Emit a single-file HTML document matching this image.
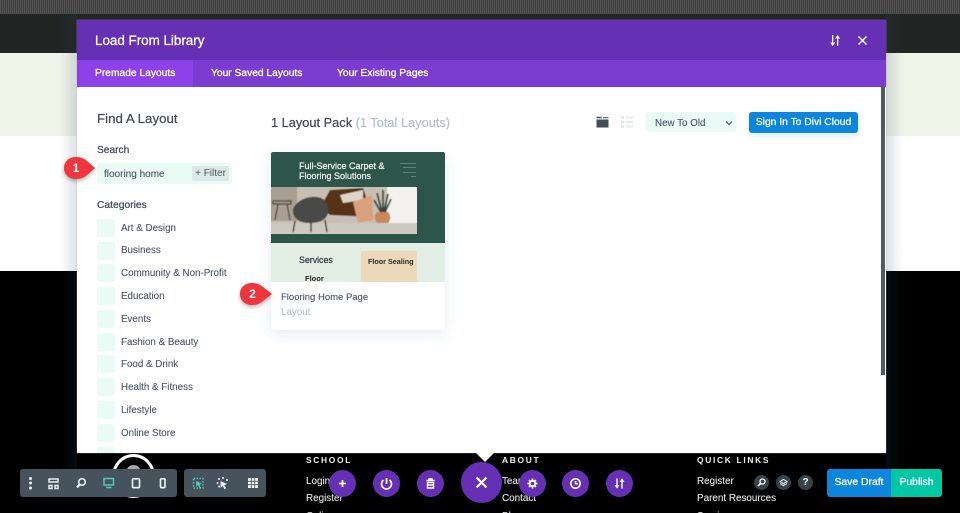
<!DOCTYPE html>
<html><head><meta charset="utf-8"><style>
*{box-sizing:border-box;margin:0;padding:0}
html,body{width:960px;height:513px;overflow:hidden;background:#000}
body{position:relative;font-family:"Liberation Sans",sans-serif;color:#4c5866}
.a{position:absolute;white-space:nowrap}
.cb{position:absolute;left:97px;width:18px;height:18px;background:#eafaf5;border-radius:3px}
.cl{position:absolute;left:121px;font-size:9.8px;color:#4c5866;line-height:12px;white-space:nowrap;-webkit-text-stroke:.12px #4c5866}
.rb{position:absolute;border-radius:50%;background:#6630b4;width:27px;height:27px;top:470px}
.rb svg,.dk svg,.tb svg{position:absolute}
.f{position:absolute;color:#e6e6e6;font-size:9.9px;white-space:nowrap;line-height:12px;-webkit-text-stroke:.1px #e6e6e6}
.h{position:absolute;color:#eee;font-size:8.4px;font-weight:bold;letter-spacing:1.7px;white-space:nowrap;line-height:10px}
.dk{position:absolute;top:475px;width:15px;height:15px;border-radius:50%;background:#37424a}
.w{color:#fff;-webkit-text-stroke:.3px #fff}
.t{position:absolute;white-space:nowrap;top:67px;font-size:10.25px;line-height:13px}
.d{color:#3e4a54;-webkit-text-stroke:.22px #3e4a54}
</style></head><body>
<div class="a" style="left:0;top:0;width:960px;height:14px;background:repeating-linear-gradient(90deg,#555 0,#555 1px,#3c3c3c 1px,#3c3c3c 2px)"></div>
<div class="a" style="left:0;top:14px;width:960px;height:39px;background:#222524"></div>
<div class="a" style="left:0;top:53px;width:960px;height:83px;background:#f0f3e8"></div>
<div class="a" style="left:0;top:136px;width:960px;height:135px;background:#fff"></div>
<div class="a" style="left:0;top:271px;width:960px;height:242px;background:#000"></div>
<div class="a" style="left:60px;top:14px;width:17px;height:460px;background:linear-gradient(90deg,rgba(40,70,90,0),rgba(40,70,90,.16))"></div>
<div class="a" style="left:886px;top:14px;width:17px;height:460px;background:linear-gradient(270deg,rgba(40,70,90,0),rgba(40,70,90,.16))"></div>

<!-- footer -->
<div class="h" style="left:306px;top:455px">SCHOOL</div>
<div class="f" style="left:306px;top:476px">Login</div>
<div class="f" style="left:306px;top:493px">Register</div>
<div class="f" style="left:306px;top:511px">Online</div>
<div class="h" style="left:502px;top:455px">ABOUT</div>
<div class="f" style="left:502px;top:476px">Team</div>
<div class="f" style="left:502px;top:493px">Contact</div>
<div class="f" style="left:502px;top:511px">Blog</div>
<div class="h" style="left:697px;top:455px">QUICK LINKS</div>
<div class="f" style="left:697px;top:476px">Register</div>
<div class="f" style="left:697px;top:493px">Parent Resources</div>
<div class="f" style="left:697px;top:511px">Services</div>
<div class="a" style="left:112px;top:454px;width:43px;height:44px;border:3px solid #fff;border-radius:50%"></div>
<div class="a" style="left:127px;top:465px;width:13px;height:10px;background:#aaa;border-radius:50%"></div>

<!-- modal -->
<div class="a" style="left:77px;top:20px;width:809px;height:433px;background:#fff;box-shadow:0 0 1px #aaa"></div>
<div class="a" style="left:77px;top:20px;width:809px;height:40px;background:#6630b4"></div>
<div class="a" style="left:77px;top:60px;width:809px;height:27px;background:#7b3dcf"></div>
<div class="a" style="left:77px;top:60px;width:116px;height:27px;background:#8c42e8"></div>
<div class="a w" style="left:95px;top:33px;font-size:13.4px;line-height:16px">Load From Library</div>
<div class="t w" style="left:95px">Premade Layouts</div>
<div class="t w" style="left:211px">Your Saved Layouts</div>
<div class="t w" style="left:337px">Your Existing Pages</div>
<svg class="a" style="left:829px;top:34px" width="12" height="13" viewBox="0 0 12 13" fill="#fff" stroke="none"><path d="M3 1h1.300v7.500h1.900L3.650 12 1.100 8.500H3zM8 12h1.300V4.500h1.900L8.650 1 6.100 4.500H8z"/></svg>
<svg class="a" style="left:857px;top:35px" width="11" height="11" viewBox="0 0 11 11" fill="none" stroke="#fff" stroke-width="1.500"><path d="M1.500 1.500l8 8M9.500 1.500l-8 8"/></svg>
<div class="a" style="left:881px;top:87px;width:4px;height:288px;background:#4f5b66"></div>

<div class="a d" style="left:97px;top:111px;font-size:13.3px;line-height:16px">Find A Layout</div>
<div class="a d" style="left:97px;top:144px;font-size:10.2px;line-height:13px">Search</div>
<div class="a" style="left:97px;top:163px;width:135px;height:21px;background:#eafaf5;border-radius:3px"></div>
<div class="a" style="left:104px;top:168px;font-size:10px;color:#4c5866;line-height:13px;-webkit-text-stroke:.12px #4c5866">flooring home</div>
<div class="a" style="left:192px;top:166px;width:37px;height:15px;background:#dde9e6;border-radius:2px;font-size:10px;line-height:15px;text-align:center;color:#4c5866">+ Filter</div>
<div class="a d" style="left:97px;top:199px;font-size:10.3px;line-height:14px">Categories</div>
<div class="cb" style="top:219px"></div><div class="cl" style="top:223px">Art &amp; Design</div>
<div class="cb" style="top:242px"></div><div class="cl" style="top:245px">Business</div>
<div class="cb" style="top:264px"></div><div class="cl" style="top:268px">Community &amp; Non-Profit</div>
<div class="cb" style="top:287px"></div><div class="cl" style="top:291px">Education</div>
<div class="cb" style="top:310px"></div><div class="cl" style="top:314px">Events</div>
<div class="cb" style="top:333px"></div><div class="cl" style="top:337px">Fashion &amp; Beauty</div>
<div class="cb" style="top:355px"></div><div class="cl" style="top:359px">Food &amp; Drink</div>
<div class="cb" style="top:378px"></div><div class="cl" style="top:382px">Health &amp; Fitness</div>
<div class="cb" style="top:401px"></div><div class="cl" style="top:405px">Lifestyle</div>
<div class="cb" style="top:424px"></div><div class="cl" style="top:428px">Online Store</div>
<div class="a" style="left:97px;top:447px;width:18px;height:6px;background:#eafaf5;border-radius:3px 3px 0 0"></div>

<div class="a d" style="left:271px;top:115px;font-size:12.8px;line-height:16px">1 Layout Pack <span style="color:#b4c4c6;-webkit-text-stroke:.22px #b4c4c6">(1 Total Layouts)</span></div>

<svg class="a" style="left:596px;top:115px" width="13" height="13" viewBox="0 0 13 13" fill="#414e58"><path d="M.5 4.500h12v8H.5zM.5 3.300V1.800h4.500l1 1.500zM6.800 2.300h5.700v1H6.800z"/></svg>
<svg class="a" style="left:621px;top:116px" width="12" height="12" viewBox="0 0 12 12" fill="#dfecea"><path d="M0 0h3v3H0zM4.500 .5H12v2H4.500zM0 4.500h3v3H0zM4.500 5H12v2H4.500zM0 9h3v3H0zM4.500 9.500H12v2H4.500z"/></svg>
<div class="a" style="left:646px;top:112px;width:90px;height:20px;background:#eafaf5;border-radius:3px"></div>
<div class="a" style="left:655px;top:117px;font-size:9.8px;color:#4c5866;line-height:13px;-webkit-text-stroke:.12px #4c5866">New To Old</div>
<svg class="a" style="left:725px;top:120px" width="8" height="6" viewBox="0 0 8 6" fill="none" stroke="#4c5866" stroke-width="1.200"><path d="M1 1.500l3 3 3-3"/></svg>
<div class="a" style="left:749px;top:112px;width:109px;height:21px;background:#0b86dc;border-radius:3px;box-shadow:0 3px 8px rgba(11,134,220,.15)"></div>
<div class="a w" style="left:749px;top:113px;width:109px;font-size:10.3px;line-height:20px;text-align:center">Sign In To Divi Cloud</div>

<!-- card -->
<div class="a" style="left:271px;top:152px;width:174px;height:178px;background:#fff;border-radius:2px;box-shadow:0 4px 14px rgba(60,110,150,.14);overflow:hidden">
 <div class="a" style="left:0;top:0;width:174px;height:91px;background:#2d5549"></div>
 <div class="a" style="left:28px;top:9px;color:#f3f3ee;font-size:9px;line-height:10px;-webkit-text-stroke:.25px #f3f3ee">Full-Service Carpet &amp;<br>Flooring Solutions</div>
 <div class="a" style="left:129px;top:11px;width:16px;height:1px;background:#5f8276"></div>
 <div class="a" style="left:132px;top:15px;width:13px;height:1px;background:#5f8276"></div>
 <div class="a" style="left:132px;top:20px;width:13px;height:1px;background:#5f8276"></div>
 <div class="a" style="left:140px;top:24px;width:5px;height:1px;background:#5f8276"></div>
 <svg class="a" style="left:0;top:35px" width="146" height="47" viewBox="0 0 146 47">
  <defs><filter id="b" x="-5%" y="-5%" width="110%" height="110%"><feGaussianBlur stdDeviation=".5"/></filter><clipPath id="c"><rect width="146" height="47"/></clipPath></defs>
  <g clip-path="url(#c)"><g filter="url(#b)">
  <rect x="-3" y="-3" width="152" height="53" fill="#c7bfb2"/>
  <rect x="116" y="-3" width="33" height="39" fill="#f4f2ee"/>
  <rect x="-3" y="-3" width="29" height="37" fill="#a89f92"/>
  <path d="M-3 36H149V50H-3z" fill="#cdc9c0"/>
  <path d="M49 21 59 3 92 1 102 30 59 28z" fill="#573312"/>
  <path d="M69 8 92 3 92 13 72 16z" fill="#ddd5c8"/>
  <path d="M82 15 101 8 102 33 87 36z" fill="#d8a07c"/>
  <path d="M22 22C26 13 36 9 46 10 54 11 57 16 57 24 57 32 50 36 38 36 28 36 21 31 22 22z" fill="#4a4a47"/>
  <path d="M24 34l-2 11M54 33l2 12M40 35v10" stroke="#2b241d" stroke-width="1.400"/>
  <path d="M106 25c-3 3-3 8 0 11h11c3-3 3-8 0-11z" fill="#c9875a"/>
  <path d="M111 25 106 6M112 25V3M113 25l4-18M110 25l-7-12M114 25l6-13" stroke="#36453a" stroke-width="1.800"/>
  <path d="M2 14h18v3H2zM7 17l-3 16M16 17l3 16" stroke="#43382d" stroke-width="1.200" fill="none"/>
  </g></g>
 </svg>
 <div class="a" style="left:0;top:91px;width:174px;height:39px;background:#e2ede3"></div>
 <div class="a" style="left:28px;top:102px;color:#2e3f44;font-size:8.8px;line-height:12px;-webkit-text-stroke:.25px #2e3f44">Services</div>
 <div class="a" style="left:34px;top:122px;color:#222;font-size:7.5px;font-weight:bold;line-height:9px">Floor</div>
 <div class="a" style="left:90px;top:99px;width:56px;height:31px;background:#ecd9ba"></div>
 <div class="a" style="left:97px;top:105px;color:#2c2a25;font-size:7.2px;font-weight:bold;line-height:9px">Floor Sealing</div>
 <div class="a" style="left:0;top:130px;width:174px;height:48px;background:#fff"></div>
 <div class="a" style="left:10px;top:139px;font-size:9.5px;color:#4c5866;line-height:13px;-webkit-text-stroke:.12px #4c5866">Flooring Home Page</div>
 <div class="a" style="left:10px;top:154px;font-size:9.8px;color:#b4c4c6;line-height:13px;-webkit-text-stroke:.12px #b4c4c6">Layout</div>
</div>

<!-- red callouts -->
<svg class="a" style="left:60px;top:152px;filter:drop-shadow(0 2px 2px rgba(0,0,0,.3))" width="40" height="32" viewBox="0 0 40 32"><path d="M16 5c5 0 8 1.500 11 4l8 7-8 7c-3 2.500-6 4-11 4-6.500 0-12-4-12-11S9.500 5 16 5z" fill="#f0363c"/><text x="16" y="20" font-family="Liberation Sans" font-size="12" font-weight="bold" fill="#fff" text-anchor="middle">1</text></svg>
<svg class="a" style="left:229px;top:278px;filter:drop-shadow(0 2px 2px rgba(0,0,0,.3))" width="46" height="32" viewBox="0 0 46 32"><path d="M23 5c5 0 8 1.500 11 4l9 7-9 7c-3 2.500-6 4-11 4-6.500 0-12-4-12-11S16.500 5 23 5z" fill="#f0363c"/><text x="23.500" y="20" font-family="Liberation Sans" font-size="12" font-weight="bold" fill="#fff" text-anchor="middle">2</text></svg>

<!-- left toolbars -->
<div class="a tb" style="left:20px;top:469px;width:157px;height:28px;background:#46535d;border-radius:3px">
 <svg style="left:0;top:0" width="157" height="28" viewBox="0 0 157 28" fill="none" stroke="#e9eef0" stroke-width="1.700">
  <circle cx="10.500" cy="9.500" r="1.500" fill="#e9eef0" stroke="none"/><circle cx="10.500" cy="14" r="1.500" fill="#e9eef0" stroke="none"/><circle cx="10.500" cy="19" r="1.500" fill="#e9eef0" stroke="none"/>
  <path d="M29 10h9v3H29zM29 16.500h3v3H29zM35 16.500h3v3H35z" stroke-width="1.500"/>
  <circle cx="62" cy="13" r="3.300" stroke-width="1.600"/><path d="M59.500 15.500 57 18.500" stroke-width="2.200"/>
  <path d="M84 9.500h9.500v6.500H84zM86 18.500h5.500" stroke="#52c7b5" stroke-width="1.500"/>
  <rect x="112.500" y="9.800" width="7" height="8.800" rx="1"/>
  <rect x="140.500" y="9.800" width="4.500" height="8.800" rx="1"/>
 </svg>
</div>
<div class="a tb" style="left:184px;top:469px;width:82px;height:28px;background:#46535d;border-radius:3px">
 <svg style="left:0;top:0" width="82" height="28" viewBox="0 0 82 28" fill="none">
  <rect x="9.500" y="9.500" width="9.500" height="9.500" stroke="#52c7b5" stroke-width="1.400" stroke-dasharray="1.500 1.500"/><path d="M12 12l6 2.500-2.500 1 1.500 3-1.500.7-1.300-3-2 1.600z" fill="#52c7b5"/>
  <path d="M36.500 12l6.500 3-2.700 1.100 1.800 3.300-1.700.8-1.600-3.300-2.200 1.800z" fill="#eef"/><circle cx="35" cy="10" r="1" fill="#eef"/><circle cx="39" cy="9" r="1" fill="#eef"/><circle cx="43" cy="11" r="1" fill="#eef"/><circle cx="33.500" cy="14" r="1" fill="#eef"/><circle cx="35" cy="17.500" r="1" fill="#eef"/>
  <path d="M64 9h10v10H64z" fill="#eef2f2"/><path d="M67.300 9v10M70.700 9v10M64 12.300h10M64 15.700h10" stroke="#46535d" stroke-width=".8"/>
 </svg>
</div>

<!-- center purple buttons -->
<div class="a" style="left:476px;top:453px;width:0;height:0;border-left:9px solid transparent;border-right:9px solid transparent;border-top:9px solid #fff"></div>
<div class="rb" style="left:329px"><svg style="left:0;top:0" width="27" height="27" fill="none" stroke="#fff" stroke-width="1.700"><path d="M13.500 10v7M10 13.500h7"/></svg></div>
<div class="rb" style="left:373px"><svg style="left:0;top:0" width="27" height="27" fill="none" stroke="#fff" stroke-width="1.700"><path d="M10.500 10a5 5 0 1 0 6 0M13.500 8v6"/></svg></div>
<div class="rb" style="left:417px"><svg style="left:0;top:0" width="27" height="27" fill="none" stroke="#fff" stroke-width="1.500"><path d="M9.500 10.500h8M12 10.500V9h3v1.500M10.500 12.500h6v5.500h-6zM10.500 15h6"/></svg></div>
<div class="rb" style="left:461px;top:462px;width:41px;height:41px"><svg style="left:0;top:0" width="41" height="41" fill="none" stroke="#fff" stroke-width="2.200"><path d="M15.500 15.500l10 10M25.500 15.500l-10 10"/></svg></div>
<div class="rb" style="left:519px"><svg style="left:0;top:0" width="27" height="27" fill="none" stroke="#fff" stroke-width="1.800"><circle cx="13.500" cy="13.500" r="2.700"/><path d="M13.500 8.500v1.800M13.500 16.700v1.800M8.500 13.500h1.800M16.700 13.500h1.800M10 10l1.200 1.200M15.800 15.800l1.200 1.200M17 10l-1.200 1.200M11.200 15.800 10 17" stroke-width="1.700"/></svg></div>
<div class="rb" style="left:562px"><svg style="left:0;top:0" width="27" height="27" fill="none" stroke="#fff" stroke-width="1.600"><circle cx="13.500" cy="13.500" r="4.700"/><path d="M13.500 11v2.700h2.500"/></svg></div>
<div class="rb" style="left:606px"><svg style="left:0;top:0" width="27" height="27" fill="#fff"><path d="M10.300 8.500h1.400v6.500h1.800L11 18.800 8.500 15h1.800zM15.300 18.500h1.400V12h1.800L16 8.200 13.500 12h1.800z"/></svg></div>

<!-- dark round -->
<div class="dk" style="left:754px"><svg style="left:0;top:0" width="15" height="15" fill="none" stroke="#fff" stroke-width="1.300"><circle cx="8.500" cy="6.500" r="2.500"/><path d="M6.600 8.400l-2.600 2.600" stroke-width="1.700"/></svg></div>
<div class="dk" style="left:776px"><svg style="left:0;top:0" width="15" height="15" fill="none" stroke="#fff" stroke-width="1"><path d="M4 6.500l3.500-2 3.500 2-3.500 2zM4 8.500l3.500 2 3.500-2"/></svg></div>
<div class="dk" style="left:798px"><div style="position:absolute;left:0;top:0;width:15px;line-height:15px;text-align:center;color:#fff;font-size:10px;font-weight:bold">?</div></div>

<!-- save/publish -->
<div class="a w" style="left:827px;top:469px;width:64px;height:28px;background:#0b86dc;border-radius:3px 0 0 3px;font-size:10.4px;line-height:27px;text-align:center">Save Draft</div>
<div class="a w" style="left:891px;top:469px;width:51px;height:28px;background:#00c8a5;border-radius:0 3px 3px 0;font-size:10.4px;line-height:27px;text-align:center">Publish</div>
</body></html>
